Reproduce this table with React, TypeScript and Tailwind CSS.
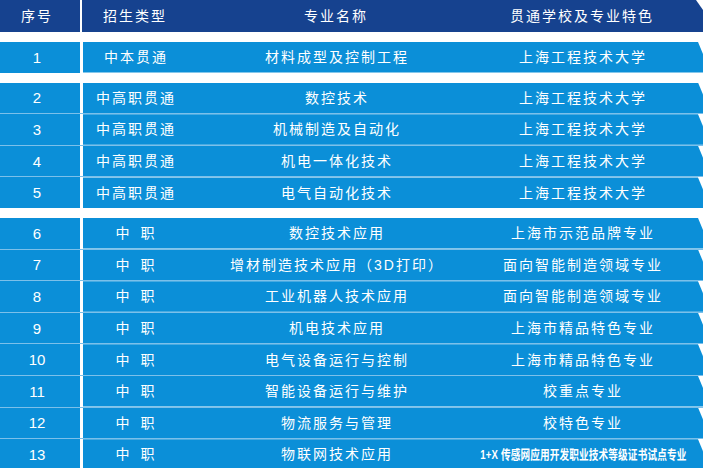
import React from "react";

type Row = { n: string; type: string; major: string; school: string; special?: boolean };

const g1: Row[] = [{ n: "1", type: "中本贯通", major: "材料成型及控制工程", school: "上海工程技术大学" }];
const g2: Row[] = [
  { n: "2", type: "中高职贯通", major: "数控技术", school: "上海工程技术大学" },
  { n: "3", type: "中高职贯通", major: "机械制造及自动化", school: "上海工程技术大学" },
  { n: "4", type: "中高职贯通", major: "机电一体化技术", school: "上海工程技术大学" },
  { n: "5", type: "中高职贯通", major: "电气自动化技术", school: "上海工程技术大学" },
];
const ZZ = "中\u2002职";
const g3: Row[] = [
  { n: "6", type: ZZ, major: "数控技术应用", school: "上海市示范品牌专业" },
  { n: "7", type: ZZ, major: "增材制造技术应用（3D打印）", school: "面向智能制造领域专业" },
  { n: "8", type: ZZ, major: "工业机器人技术应用", school: "面向智能制造领域专业" },
  { n: "9", type: ZZ, major: "机电技术应用", school: "上海市精品特色专业" },
  { n: "10", type: ZZ, major: "电气设备运行与控制", school: "上海市精品特色专业" },
  { n: "11", type: ZZ, major: "智能设备运行与维护", school: "校重点专业" },
  { n: "12", type: ZZ, major: "物流服务与管理", school: "校特色专业" },
  { n: "13", type: ZZ, major: "物联网技术应用", school: "1+X 传感网应用开发职业技术等级证书试点专业", special: true },
];

function Group({ rows, className }: { rows: Row[]; className?: string }) {
  return (
    <div className={"flex flex-col " + (className ?? "")}>
      {rows.map((r, i) => (
        <div key={r.n} className={"flex gap-[3px] " + (i > 0 ? "border-t border-[#7cc0ea]" : "")}>
          <div className="w-[80px] h-[30.6px] bg-[#0b8fd8] flex items-center justify-center pr-[6px] text-[15px] font-['Liberation_Sans',sans-serif]">
            {r.n}
          </div>
          <div className="flex-1 h-[30.6px] bg-[#0b8fd8] grid grid-cols-[106px_296px_196px_1fr] items-center [clip-path:polygon(0_0,calc(100%-5px)_0,100%_12px,100%_100%,0_100%)]">
            <div className="text-center tracking-[2px] whitespace-pre">{r.type}</div>
            <div className="text-center tracking-[2px] whitespace-nowrap">{r.major}</div>
            {r.special ? (
              <div className="flex justify-center whitespace-nowrap overflow-visible">
                <span className="inline-block font-bold text-[13px] scale-x-[0.74] tracking-[0.2px]">{r.school}</span>
              </div>
            ) : (
              <div className="text-center tracking-[2px] whitespace-nowrap">{r.school}</div>
            )}
            <div />
          </div>
        </div>
      ))}
    </div>
  );
}

export default function App() {
  return (
    <div className="w-[703px] h-[468px] bg-white overflow-hidden text-white text-[14px] leading-none font-['Liberation_Sans','Noto_Sans_CJK_SC',sans-serif]">
      <div className="flex gap-[2px] h-[32px]">
        <div className="w-[80px] bg-[#16428f] flex items-center justify-center pr-[6px] tracking-[2px]">序号</div>
        <div className="flex-1 bg-[#16428f] grid grid-cols-[106px_296px_196px_1fr] items-center [clip-path:polygon(0_0,calc(100%-7px)_0,100%_10px,100%_100%,0_100%)]">
          <div className="text-center tracking-[2px]">招生类型</div>
          <div className="text-center tracking-[2px]">专业名称</div>
          <div className="text-center tracking-[2px] whitespace-nowrap">贯通学校及专业特色</div>
          <div />
        </div>
      </div>
      <Group rows={g1} className="mt-[10px]" />
      <Group rows={g2} className="mt-[10px]" />
      <Group rows={g3} className="mt-[10px]" />
    </div>
  );
}
